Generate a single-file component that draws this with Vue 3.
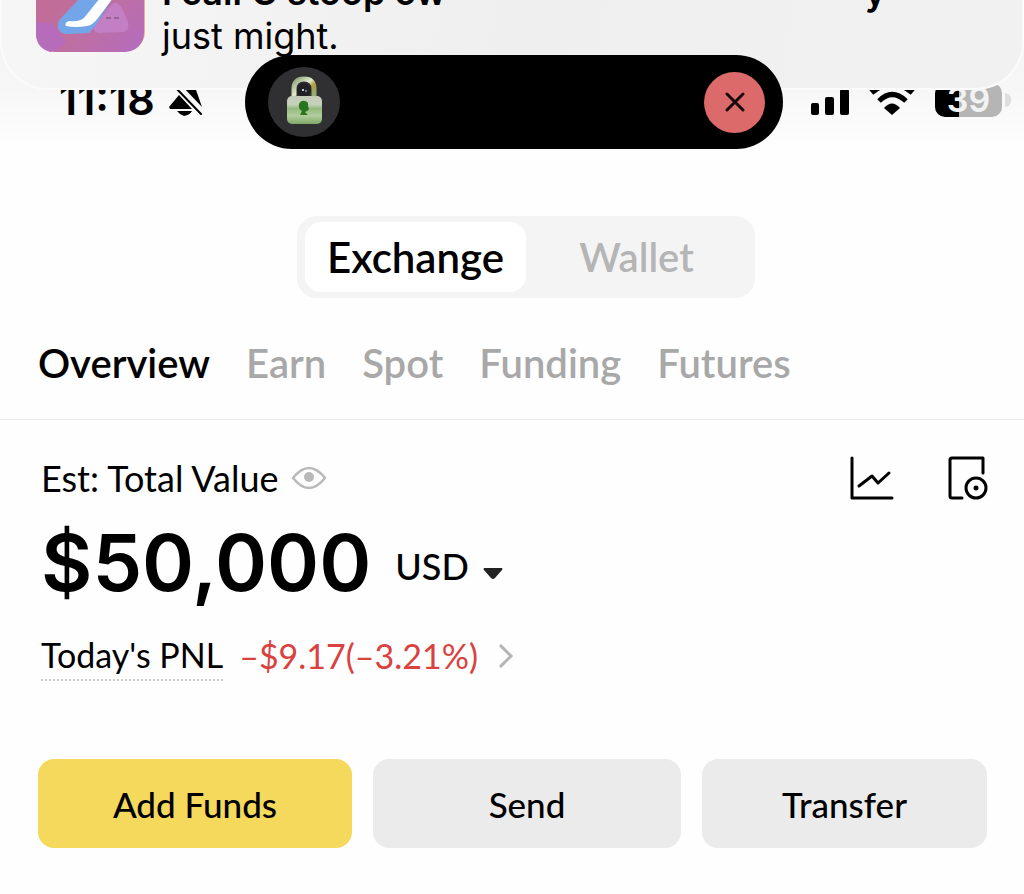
<script setup>
import { ref } from 'vue'

const modes = ['Exchange', 'Wallet']
const mode = ref('Exchange')
const tabs = ['Overview', 'Earn', 'Spot', 'Funding', 'Futures']
const tab = ref('Overview')
</script>

<template>
  <div class="screen">
    <header class="top">
      <div class="status">
        <div class="status-left">
          <span class="time">11:18</span>
          <svg class="bell" width="34" height="36" viewBox="0 0 34 36" aria-hidden="true">
            <path d="M0 26 L10 14 L23 28 H1 Z M13 5 Q20 1 26 6 L33 26 Z" fill="#000" />
            <path d="M8 30 H23 Q21 34 15 35 Q11 34 8 30 Z" fill="#000" />
            <path d="M5 5 L32 33" stroke="#000" stroke-width="2" stroke-linecap="round" />
          </svg>
        </div>
        <div class="island">
          <svg class="lock" width="72" height="70" viewBox="0 0 72 70" aria-hidden="true">
            <defs>
              <linearGradient id="body" x1="0" y1="0" x2="0" y2="1">
                <stop offset="0" stop-color="#c3cbb9" />
                <stop offset=".3" stop-color="#c5d2ba" />
                <stop offset=".45" stop-color="#94b97f" />
                <stop offset=".7" stop-color="#b1ce9c" />
                <stop offset="1" stop-color="#7fa768" />
              </linearGradient>
              <linearGradient id="shackle" x1="0" y1="0" x2="1" y2="1">
                <stop offset="0" stop-color="#8ba373" />
                <stop offset=".45" stop-color="#e5e9cf" />
                <stop offset=".65" stop-color="#ad9a42" />
                <stop offset="1" stop-color="#8fb17e" />
              </linearGradient>
            </defs>
            <ellipse cx="36" cy="35" rx="36" ry="35" fill="#303033" />
            <path d="M26 30 V22 Q26 12 36 12 Q46 12 46 22 V30" fill="none" stroke="url(#shackle)" stroke-width="5" />
            <circle cx="36" cy="23" r="7" fill="#202126" />
            <rect x="19" y="29" width="35" height="28" rx="5" fill="url(#body)" />
            <path d="M31 37 Q33 33 37 34 Q41 35 40 39 L41 42 Q40 44 37 45 L40 48 H32 L34 44 Q30 42 31 37 Z" fill="#28741f" />
            <circle cx="35" cy="23" r="1" fill="#fff" />
            <circle cx="38" cy="24" r="1" fill="#8b8d9c" />
          </svg>
          <button class="close" type="button" aria-label="Close">
            <svg width="20" height="20" viewBox="0 0 20 20" aria-hidden="true">
              <path d="M2 2 L18 18 M18 2 L2 18" stroke="#17090a" stroke-width="3" stroke-linecap="round" />
            </svg>
          </button>
        </div>
        <div class="status-right">
          <svg width="38" height="34" viewBox="0 0 38 34" aria-hidden="true">
            <rect x="0" y="20" width="8" height="12" rx="2" />
            <rect x="14" y="14" width="9" height="18" rx="2" />
            <rect x="29" y="6" width="9" height="26" rx="2" />
          </svg>
          <svg width="46" height="34" viewBox="0 0 46 34" aria-hidden="true">
            <path d="M23 32 L15 25 Q23 16 31 25 Z" />
            <path d="M10 18 Q23 5 37 18" fill="none" stroke="#000" stroke-width="5" />
            <path d="M2 9 Q23 -9 44 9" fill="none" stroke="#000" stroke-width="7" />
          </svg>
          <span class="battery"><span class="level">39</span></span>
        </div>
      </div>
      <div class="notice">
        <svg class="app-icon" width="109" height="110" viewBox="0 0 109 110" aria-hidden="true">
          <defs>
            <linearGradient id="tile" x1="0" y1="0" x2="1" y2="1">
              <stop offset="0" stop-color="#c66a91" />
              <stop offset=".6" stop-color="#bf6f9f" />
              <stop offset="1" stop-color="#b46cc0" />
            </linearGradient>
          </defs>
          <rect x="1" y="1" width="108" height="108" rx="19" fill="#e9b58f" />
          <rect width="108" height="110" rx="19" fill="url(#tile)" />
          <path d="M0 80 L15 81 L30 99 Q22 110 14 110 Q0 106 0 91 Z" fill="#b66cbb" />
          <path d="M77 61 Q82 60 86 66 L92 80 Q94 89 87 90 L62 91 Q55 88 59 83 Z" fill="#c37fc3" />
          <path d="M46 54 L27 74 Q21 79 22 86 Q24 92 32 92 L53 91 L60 83 L77 56 Z" fill="#73a6e9" />
          <path d="M64 56 L48 76 Q43 80 33 79 Q28 81 30 84 Q39 86 51 84 Q57 83 62 76 L77 56 Z" fill="#fff" />
          <path d="M70 76 H75 M78 76 H83" stroke="#966296" stroke-width="2" />
        </svg>
        <div class="notice-text">
          <p class="notice-title"><span>I call G stoop ow</span><span>y</span></p>
          <p class="notice-body">just might.</p>
        </div>
      </div>
    </header>

    <main>
      <div class="switcher">
        <div class="segment" role="group" aria-label="Account">
          <button v-for="m in modes" :key="m" type="button" :class="{ on: m === mode }" @click="mode = m">{{ m }}</button>
        </div>
      </div>

      <nav class="tabs">
        <a v-for="t in tabs" :key="t" href="#" :class="{ on: t === tab }" @click.prevent="tab = t">{{ t }}</a>
      </nav>

      <section class="summary">
        <div class="est">
          <span>Est: Total Value</span>
          <button class="plain eye" type="button" aria-label="Hide balance">
            <svg width="36" height="24" viewBox="0 0 36 24" aria-hidden="true">
              <path d="M2 12 Q10 2 18 2 Q26 2 34 12 Q26 22 18 22 Q10 22 2 12 Z" fill="none" stroke="#b9b9b9" stroke-width="2.5" stroke-linejoin="round" />
              <circle cx="18" cy="11" r="5" fill="#b9b9b9" />
            </svg>
          </button>
          <div class="tools">
            <button class="plain" type="button" aria-label="Chart">
              <svg width="44" height="44" viewBox="0 0 44 44" fill="none" stroke="#000" stroke-width="3" stroke-linecap="round" stroke-linejoin="round" aria-hidden="true">
                <path d="M2 2 V42 H42 M9 30 L22 20 L28 27 L39 17" />
              </svg>
            </button>
            <button class="plain" type="button" aria-label="History">
              <svg width="40" height="44" viewBox="0 0 40 44" fill="none" stroke="#000" stroke-width="3" stroke-linecap="round" stroke-linejoin="round" aria-hidden="true">
                <path d="M35 17 V2 H4 Q2 2 2 4 V40 Q2 42 4 42 H14" />
                <circle cx="28" cy="32" r="10" />
                <circle cx="28" cy="32" r="2.5" fill="#000" stroke="none" />
              </svg>
            </button>
          </div>
        </div>

        <div class="balance">
          <strong>$50,000</strong>
          <button class="plain currency" type="button">
            USD
            <svg width="20" height="12" viewBox="0 0 20 12" aria-hidden="true">
              <path d="M1 0 H19 Q20 1 19 2 L12 10 Q10 12 8 10 L1 2 Q0 1 1 0 Z" fill="#222" />
            </svg>
          </button>
        </div>

        <a class="pnl" href="#">
          <span class="pnl-label">Today's PNL</span>
          <span class="loss">–$9.17(–3.21%)</span>
          <svg class="chevron" width="16" height="26" viewBox="0 0 16 26" fill="none" aria-hidden="true">
            <path d="M2 2 L13 13 L2 24" stroke="#b4b4b4" stroke-width="3" />
          </svg>
        </a>
      </section>

      <div class="actions">
        <button class="primary" type="button">Add Funds</button>
        <button type="button">Send</button>
        <button type="button">Transfer</button>
      </div>
    </main>
  </div>
</template>

<style>
body { background: #fefefe; }
</style>

<style scoped>
* { box-sizing: border-box; }
.screen { font-family: Lato, "Liberation Sans", sans-serif; color: #000; overflow: hidden; }
button { font: inherit; color: inherit; border: 0; padding: 0; background: none; cursor: pointer; }
a { color: inherit; text-decoration: none; }
p { margin: 0; }
svg { display: block; flex: none; }
.top {
  position: relative;
  padding: 55px 22px 0 59px;
  font-family: Inter, "Liberation Sans", sans-serif;
  background: linear-gradient(#f3f3f3 0, #f7f7f7 90px, #fefefe 149px);
}
.status { display: flex; align-items: center; height: 94px; }
.status-left { display: flex; align-items: center; gap: 14px; flex: 1; margin-bottom: 6px; }
.time { font-size: 43px; line-height: 48px; font-weight: 600; }
.island {
  position: relative;
  z-index: 3;
  display: flex;
  align-items: center;
  justify-content: space-between;
  width: 538px;
  height: 94px;
  padding: 0 18px 0 23px;
  border-radius: 47px;
  background: #000;
}
.close { display: grid; place-items: center; width: 61px; height: 61px; border-radius: 50%; background: #dc6a6a; }
.status-right { display: flex; align-items: center; gap: 20px; margin: 0 0 4px 28px; }
.battery {
  position: relative;
  display: grid;
  place-items: center;
  width: 67px;
  height: 34px;
  border-radius: 10px;
  color: #f2f2f2;
  font-size: 34px;
  font-weight: 600;
  line-height: 32px;
  background: linear-gradient(90deg, #000 24px, #b5b5b5 24px);
}
.battery::after {
  content: "";
  position: absolute;
  left: 70px;
  top: 10px;
  width: 6px;
  height: 14px;
  border-radius: 0 7px 7px 0;
  background: #dedede;
}
.notice {
  position: absolute;
  z-index: 2;
  inset: 0 0 auto;
  display: flex;
  align-items: flex-end;
  gap: 17px;
  height: 90px;
  padding: 0 36px 36px 34px;
  overflow: hidden;
  border: 2px solid #fbfbfb;
  border-top: 0;
  border-radius: 0 0 48px 48px;
  background: linear-gradient(100deg, #f6f6f6, #efefef 50%, #f1f1f1);
}
.notice-text { flex: 1; font-size: 36px; line-height: 32px; }
.notice-title { display: flex; justify-content: space-between; margin-bottom: 12px; padding-right: 100px; font-weight: 600; }
.switcher { display: flex; justify-content: center; padding: 67px 0 0 28px; }
.segment {
  display: flex;
  width: 458px;
  padding: 6px 8px;
  border-radius: 20px;
  background: #f4f4f5;
}
.segment button { flex: 1; height: 70px; border-radius: 16px; font-size: 40px; font-weight: 600; color: #b5b5b5; }
.segment button.on { background: #fff; color: #000; font-size: 42px; }
.tabs {
  display: flex;
  gap: 36px;
  padding: 39px 38px 30px;
  border-bottom: 1px solid #ececec;
  font-size: 40px;
  line-height: 52px;
  font-weight: 600;
  color: #a8a8a8;
}
.tabs .on { color: #000; }
.summary { padding: 34px 36px 0 41px; }
.est { display: flex; align-items: center; gap: 12px; font-size: 36px; line-height: 48px; }
.tools { display: flex; gap: 54px; margin-left: auto; }
.balance { display: flex; align-items: center; gap: 24px; padding-top: 4px; }
.balance strong { font-family: Inter, "Liberation Sans", sans-serif; font-size: 79px; line-height: 112px; font-weight: 600; }
.currency { display: flex; align-items: baseline; gap: 14px; padding-top: 8px; font-size: 36px; font-weight: 500; }
.pnl { display: flex; align-items: center; gap: 16px; margin-top: 13px; font-size: 34px; line-height: 48px; }
.pnl-label { border-bottom: 2px dotted #ccc; }
.chevron { margin-left: 4px; }
.loss { color: #d9423f; }
.actions { display: grid; grid-template-columns: 314fr 308fr 285fr; gap: 21px; padding: 78px 37px 46px 38px; }
.actions button { height: 89px; border-radius: 16px; background: #ebebeb; font-size: 35px; font-weight: 500; }
.actions .primary { background: #f5d95c; }
</style>
